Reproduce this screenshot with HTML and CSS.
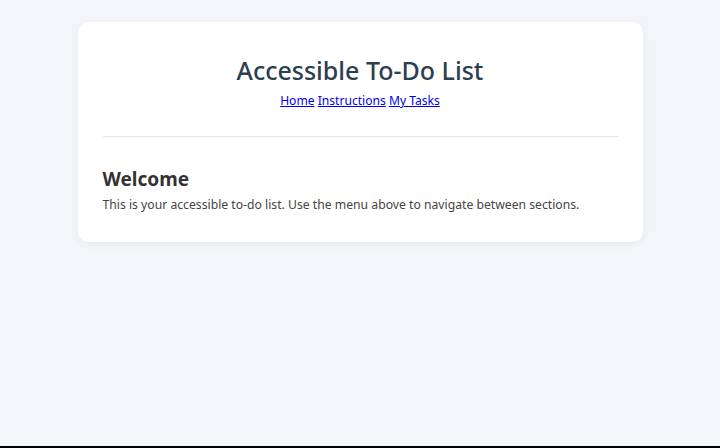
FILE: index.html
```html
<!DOCTYPE html>
<html lang="en">
<head>
<meta charset="utf-8">
<title>Accessible To-Do List</title>
<link rel="stylesheet" href="styles.css">
</head>
<body>
<main class="card">
  <header class="header">
    <h1 class="title">Accessible To-Do List</h1>
    <nav class="nav">
      <a href="#home">Home</a>
      <a href="#instructions">Instructions</a>
      <a href="#tasks">My Tasks</a>
    </nav>
  </header>
  <hr class="divider">
  <section class="section">
    <h2 class="section-title">Welcome</h2>
    <p class="section-text">This is your accessible to-do list. Use the menu above to navigate between sections.</p>
  </section>
</main>
</body>
</html>
```
FILE: styles.css
```css
html {
  background: #000;
  height: 448px;
}
body {
  margin: 0;
  height: 446px;
  background: #f4f5f9;
  font-family: "Noto Sans", "Open Sans", sans-serif;
  overflow: hidden;
  padding-top: 22px;
  box-sizing: border-box;
}
.card {
  display: block;
  width: 565px;
  margin: 0 auto;
  box-sizing: border-box;
  background: #fff;
  border-radius: 10px;
  box-shadow: 0 2px 10px rgba(0, 0, 0, 0.06);
  padding: 30px 25px 27px;
}
.header {
  text-align: center;
}
.title {
  margin: 0;
  font-size: 25px;
  font-weight: 500;
  color: #2c3e50;
  line-height: 36px;
}
.nav {
  font-size: 12.1px;
  line-height: 20px;
  margin-top: 3px;
}
.nav a {
  color: #0000ee;
}
.divider {
  border: 0;
  border-top: 1px solid #e8e8e8;
  margin: 25px 0 0;
}
.section {
  padding-top: 29px;
}
.section-title {
  margin: 0;
  font-size: 19px;
  font-weight: 700;
  color: #333;
  line-height: 26px;
}
.section-text {
  margin: 3px 0 0;
  font-size: 12.2px;
  color: #444;
  line-height: 20px;
}
```
